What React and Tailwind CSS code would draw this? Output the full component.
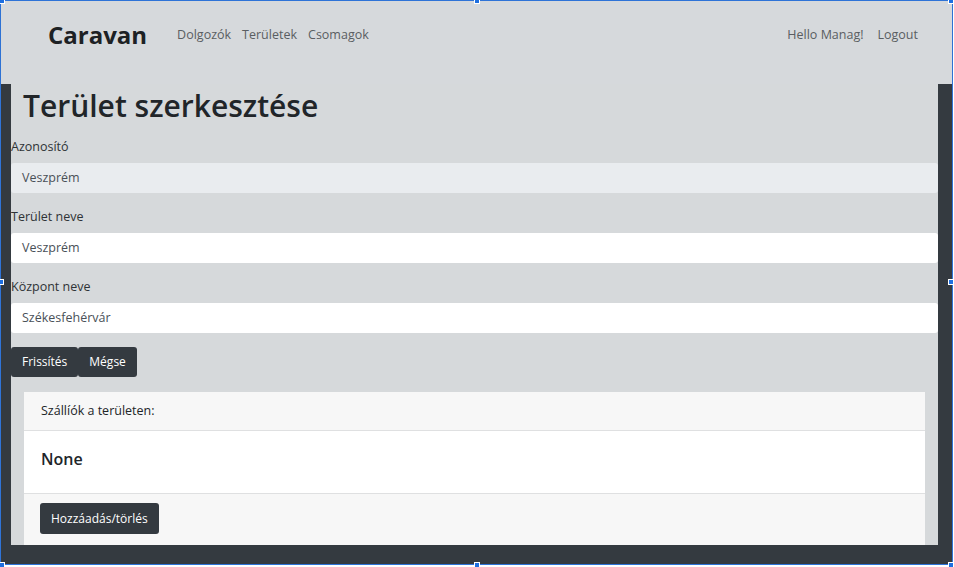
import React from "react";

const font = { fontFamily: "'Open Sans', 'Noto Sans', 'Liberation Sans', sans-serif" };

function Handle({ className }) {
  return <div className={"absolute h-[6px] w-[6px] bg-[#1e6fe0] border border-white " + className} />;
}

function Field({ label, value, readOnly }) {
  return (
    <div>
      <div className="h-[20px] text-[12.5px] leading-[20px] text-[#2f3336]">{label}</div>
      <div
        className={[
          "mt-[6px] mb-[14px] flex h-[30px] items-center rounded-[3px] px-[11px] text-[12.5px] text-[#495057]",
          readOnly ? "bg-[#e9ecef]" : "bg-white",
        ].join(" ")}
      >
        {value}
      </div>
    </div>
  );
}

export default function App() {
  return (
    <div className="relative h-[567px] w-[954px] overflow-hidden bg-white" style={font}>
      <div className="flex h-[565px] w-[953px] flex-col border border-[#2f74d8]">
        {/* Navbar */}
        <div className="h-[83px] shrink-0 bg-[#d6d9dc] pl-[47px] pr-[34px] pt-[18px] shadow-[0_1px_2px_rgba(0,0,0,0.06)]">
          <div className="flex h-[32px] items-center">
            <div className="text-[24px] font-bold text-[#1d2124]">Caravan</div>
            <nav className="ml-[30px] flex gap-[11px] text-[12.5px] text-[#5a5e62]">
              <span>Dolgozók</span>
              <span>Területek</span>
              <span>Csomagok</span>
            </nav>
            <div className="ml-auto flex gap-[14px] text-[12.5px] text-[#5a5e62]">
              <span>Hello Manag!</span>
              <span>Logout</span>
            </div>
          </div>
        </div>

        {/* Body */}
        <div className="flex min-h-0 flex-1 flex-col bg-[#343a40] pb-[19px] pl-[10px] pr-[14px]">
          <div className="min-h-0 flex-1 overflow-hidden bg-[#d6d9db]">
            <h1 className="mt-[3px] h-[38px] pl-[12px] text-[30px] font-semibold leading-[38px] text-[#212529]">
              Terület szerkesztése
            </h1>
            <div className="mt-[12px]">
              <Field label="Azonosító" value="Veszprém" readOnly />
              <Field label="Terület neve" value="Veszprém" />
              <Field label="Központ neve" value="Székesfehérvár" />
            </div>
            <div className="flex">
              <button className="h-[30px] rounded-[3px] bg-[#343a40] px-[11px] text-[12px] text-white">Frissítés</button>
              <button className="h-[30px] rounded-[3px] bg-[#343a40] px-[11px] text-[12px] text-white">Mégse</button>
            </div>
            <div className="mx-[13px] mt-[15px] bg-white">
              <div className="flex h-[39px] items-center border-b border-[#dfe0e1] bg-[#f7f7f7] px-[17px] text-[12.5px] text-[#212529]">
                Szállíók a területen:
              </div>
              <div className="flex h-[62px] items-center px-[17px] pb-[6px] text-[16px] font-semibold text-[#212529]">None</div>
              <div className="h-[60px] border-t border-[#dfe0e1] bg-[#f7f7f7] px-[16px] pt-[9px]">
                <button className="h-[31px] rounded-[3px] bg-[#343a40] px-[11px] text-[12px] text-white">Hozzáadás/törlés</button>
              </div>
            </div>
          </div>
        </div>
      </div>

      <Handle className="left-[-1px] top-[-2px]" />
      <Handle className="left-[474px] top-[-2px]" />
      <Handle className="right-[0px] top-[-2px]" />
      <Handle className="left-[-2px] top-[279px]" />
      <Handle className="right-[0px] top-[279px]" />
      <Handle className="left-[-1px] bottom-[-1px]" />
      <Handle className="left-[474px] bottom-[-1px]" />
      <Handle className="right-[0px] bottom-[-1px]" />
    </div>
  );
}
